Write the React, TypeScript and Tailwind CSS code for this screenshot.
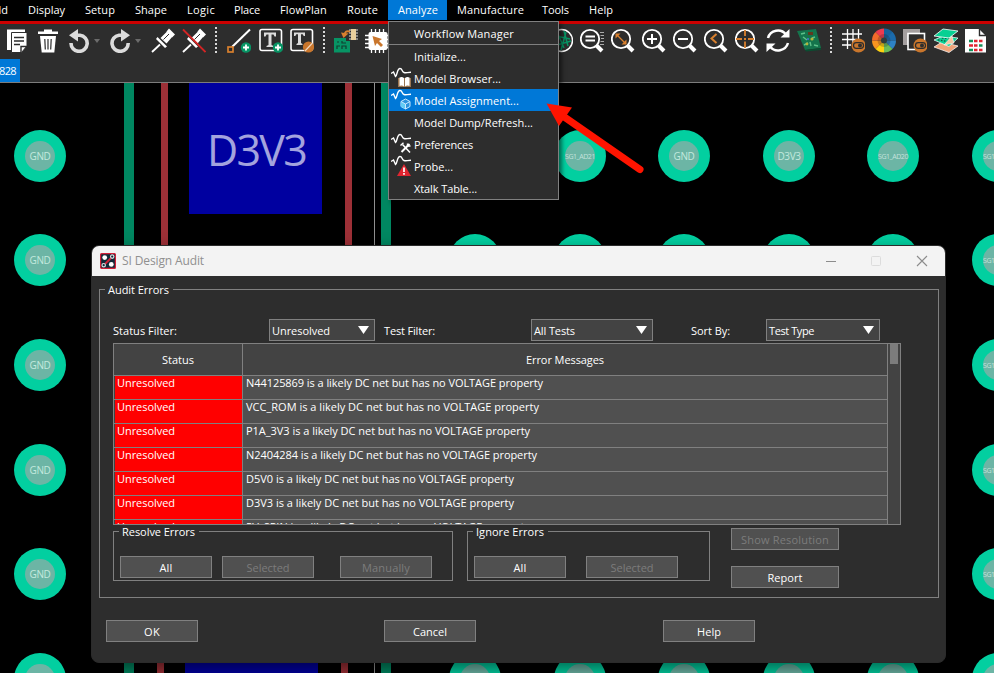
import React, { useLayoutEffect, useRef, useState } from "react";

/* Text set to an exact advance width by spreading the difference over its letters. */
function Fit({ children, w, className = "" }: { children: string; w: number; className?: string }) {
  const ref = useRef<HTMLSpanElement>(null);
  const [spacing, setSpacing] = useState(0);
  useLayoutEffect(() => {
    if (ref.current) {
      const natural = ref.current.getBoundingClientRect().width;
      setSpacing((w - natural) / children.length);
    }
  }, []);
  return (
    <span ref={ref} className={`inline-block whitespace-pre ${className}`} style={{ letterSpacing: spacing }}>
      {children}
    </span>
  );
}

/* ---------- toolbar icons ---------- */

function Icon({ children }: { children?: React.ReactNode }) {
  return (
    <svg width="24" height="25" viewBox="0 0 24 25" fill="none" className="shrink-0">
      {children}
    </svg>
  );
}

function Lens({ children }: { children?: React.ReactNode }) {
  return (
    <Icon>
      <path d="M16.5 17.5 22 23" stroke="#fff" strokeWidth="4" />
      <circle cx="10" cy="11" r="9.2" stroke="#fff" strokeWidth="1.8" />
      {children}
    </Icon>
  );
}

function Divider() {
  return (
    <svg width="6" height="27" viewBox="0 0 6 27" className="shrink-0">
      <path d="M3 0V26" stroke="#d8d8d8" strokeWidth="2" strokeDasharray="2 2" />
    </svg>
  );
}

function Caret({ className = "" }: { className?: string }) {
  return (
    <svg width="6" height="4" viewBox="0 0 6 4" className={`mt-[11px] ${className}`}>
      <path d="M0 0H6L3 4Z" fill="#6c6c6c" />
    </svg>
  );
}

function Pin() {
  return (
    <>
      <path d="M1 24 9 16.5" stroke="#fff" strokeWidth="1.8" />
      <path d="M15.5 3.5 18 .5 24 6.5 21 9.500Z" fill="#fff" />
      <path d="M16 3.5 21.500 8.500 15.500 15.500 9.500 10Z" fill="#fff" />
      <path d="M12.5 11.500 18 6" stroke="#2d2d2d" strokeWidth="1" />
      <path d="M6.5 9 16 18.5 14 20 5 11Z" fill="#fff" />
    </>
  );
}

function Plus({ x, y }: { x: number; y: number }) {
  return (
    <>
      <circle cx={x} cy={y} r="5.2" fill="#079464" />
      <path d={`M${x - 3} ${y}h6M${x} ${y - 3}v6`} stroke="#fff" strokeWidth="1.8" />
    </>
  );
}

function Eye() {
  return (
    <>
      <circle cx="17.5" cy="17.5" r="7" fill="#c9762c" />
      <rect x="12.5" y="14.7" width="10" height="5.6" rx="2.8" stroke="#2d2d2d" strokeWidth="1.2" />
      <circle cx="19" cy="17.5" r="2" fill="#2d2d2d" />
    </>
  );
}

function Toolbar() {
  return (
    <div className="flex h-[35px] items-start gap-[7px] pt-1 pl-[5px]">
      <Icon>
        <path d="M2 1.500H20V6H6V22H2Z" fill="#fff" />
        <path d="M6.500 4.5H22V18L16.500 24.500H6.500Z" fill="#fff" stroke="#2d2d2d" strokeWidth="1" />
        <path d="M9 9.5H19M9 13H19M9 16.5H15" stroke="#2d2d2d" strokeWidth="1.4" />
        <path d="M16 24.5V18.5H22" stroke="#2d2d2d" strokeWidth="1.4" />
      </Icon>
      <Icon>
        <path d="M2 3.5H22V6H2ZM8 1.5H16V4H8Z" fill="#fff" />
        <path d="M4 8H20L18.3 24.5H5.7Z" fill="#fff" />
        <path d="M8.8 11 9.3 21.5M12 11V21.5M15.2 11 14.7 21.5" stroke="#2d2d2d" strokeWidth="1.2" />
      </Icon>
      <div className="flex w-[34px]">
        <Icon>
          <path d="M9 7.2H13A8.1 8.1 0 1 1 4 15" stroke="#dcdcdc" strokeWidth="3.6" />
          <path d="M2 7.3 11 1V13.5Z" fill="#dcdcdc" />
        </Icon>
        <Caret className="ml-[3px]" />
      </div>
      <div className="flex w-9">
        <Icon>
          <path d="M15 7.2H11A8.1 8.1 0 1 0 20.2 15" stroke="#dcdcdc" strokeWidth="3.6" />
          <path d="M22 7.3 13 1V13.5Z" fill="#dcdcdc" />
        </Icon>
        <Caret className="ml-[3px]" />
      </div>
      <Icon>
        <Pin />
      </Icon>
      <Icon>
        <Pin />
        <path d="M1 1.5 23.5 24" stroke="#d52525" strokeWidth="1.8" />
      </Icon>
      <div className="-mt-px flex w-[7px]">
        <Divider />
      </div>
      <Icon>
        <path d="M5 19 23 1.5" stroke="#fff" strokeWidth="2" />
        <rect x="1" y="19" width="5" height="5" stroke="#d9802e" strokeWidth="1.7" />
        <Plus x={19} y={19.5} />
      </Icon>
      <div className="ml-px flex">
        <Icon>
          <rect x="1" y="1.5" width="21.5" height="21" rx="2" stroke="#fff" strokeWidth="1.6" />
          <path d="M5 4.5H17V8.5H15.5L14.5 6.5H12.5V17L14.5 18V19H7.5V18L9.5 17V6.5H7.5L6.5 8.5H5Z" fill="#dcdcdc" />
          <Plus x={19} y={19.5} />
        </Icon>
      </div>
      <Icon>
        <rect x="1" y="1.5" width="21.5" height="21" rx="2" stroke="#fff" strokeWidth="1.6" />
        <path d="M4 4.5H15V8H13.7L12.7 6.3H11V15L12.5 16V17H6.5V16L8 15V6.3H6.3L5.3 8H4Z" fill="#dcdcdc" />
        <circle cx="18.5" cy="19" r="5.6" fill="#c9762c" />
        <path d="M15 23 22.5 15" stroke="#f0d8c0" strokeWidth="1.1" />
      </Icon>
      <div className="-mt-px flex">
        <Divider />
      </div>
      <Icon>
        <path d="M0 10H12V13H16V24.5H0Z" fill="#079464" />
        <path d="M3 14H5M3 21V18H6M8 21V18H12V21M8 13V15H12" stroke="#123e30" strokeWidth="1.2" />
        <path d="M16 3.500C12 2.5 11 4 10.5 7" stroke="#d9802e" strokeWidth="2" />
        <path d="M7 4.500 14.5 5.5 9.500 10Z" fill="#d9802e" />
        <path d="M15 2H24M15 5H24M15 8H24M15 11H24" stroke="#ddd" strokeWidth="1" />
        <rect x="17" y="1" width="5" height="11" fill="#e8cf9d" />
      </Icon>
      <Icon>
        <path d="M6.5 1V25M10.5 1V25M14.5 1V25M18.5 1V25M0 7.5H24M0 11.5H24M0 15.5H24M0 19.5H24" stroke="#fff" strokeWidth="1.3" />
        <rect x="3.5" y="4" width="19" height="18" rx="2" fill="#fff" />
        <path d="M7.5 8 17 11 14 13 18 17 16 19 12 15 10 18Z" fill="#c9762c" />
      </Icon>
      <div className="w-[146px] shrink-0" />
      <Icon>
        <circle cx="12.5" cy="12.5" r="11" stroke="#fff" strokeWidth="1.5" />
        <path d="M8 4 15 20M17 4 12 22M7 8 21 11M8 17 22 13M15 3 19 18" stroke="#079464" strokeWidth="1.5" />
      </Icon>
      <Lens>
        <path d="M5.5 8.5H15M5.5 12.5H15" stroke="#fff" strokeWidth="1.8" />
        <path d="M20 4.5H24M20.5 7.5H24M21 10.5H24M20.5 13.5H24M20 16.5H24" stroke="#aaa" strokeWidth="1" />
      </Lens>
      <Lens>
        <path d="M6 7 14 15" stroke="#d9802e" strokeWidth="1.3" />
        <path d="M4.5 5.5H9.5L4.5 10.5ZM15.5 16.5H10.5L15.5 11.5Z" fill="#d9802e" />
      </Lens>
      <Lens>
        <path d="M5 11H15M10 6V16" stroke="#fff" strokeWidth="2" />
      </Lens>
      <Lens>
        <path d="M5 11H15" stroke="#fff" strokeWidth="2" />
      </Lens>
      <Lens>
        <path d="M12.5 6 7.5 10.5 12.5 15" stroke="#d9802e" strokeWidth="2" />
      </Lens>
      <Lens>
        <path d="M10 2V8M10 13.5V20M1 11H7M13 11H19" stroke="#d9802e" strokeWidth="1.8" />
        <path d="M9 11H11" stroke="#d9802e" strokeWidth="2" />
      </Lens>
      <Icon>
        <path d="M2 10A10.3 10.3 0 0 1 20 6.5M22 15A10.3 10.3 0 0 1 4 18.5" stroke="#fff" strokeWidth="2.5" />
        <path d="M23.5 1V9.5H14.5ZM.5 24V15.5H9.5Z" fill="#fff" />
      </Icon>
      <Icon>
        <path d="M0 3 19 1 24 20 8 22Z" fill="#14744c" />
        <path d="M8 22 24 20V22L9 23.5Z" fill="#0a4d31" />
        <path d="M11 4H16V7H11Z" fill="#61391f" />
        <path d="M4 6 8 5M6 9 10 12M15 10 18 9M7 17 11 15M17 17 21 18M13 14 14 18" stroke="#5ec08a" strokeWidth="1.4" />
        <circle cx="15" cy="11" r="1.6" fill="#b3b53c" />
        <circle cx="10" cy="16" r="1.4" fill="#b3b53c" />
        <path d="M10 10H12V12H10Z" fill="#3b76b0" />
      </Icon>
      <div className="-mt-px flex">
        <Divider />
      </div>
      <Icon>
        <path d="M6.5 1V21M12 1V15M17.5 1V12M1 6H21M1 11.5H16M1 17H10" stroke="#fff" strokeWidth="1.3" />
        <Eye />
      </Icon>
      <Icon>
        <path d="M12 12.5V.5A12 12 0 0 1 21 4.5Z" fill="#17629c" />
        <path d="M12 12.5 20.5 4A12 12 0 0 1 24 12.5Z" fill="#1b6bac" />
        <path d="M12 12.5H24A12 12 0 0 1 20.5 21Z" fill="#2e82c4" />
        <path d="M12 12.5 20.5 21A12 12 0 0 1 12 24.5Z" fill="#6bbd58" />
        <path d="M12 12.5V24.5A12 12 0 0 1 3.5 21Z" fill="#fdd110" />
        <path d="M12 12.5 3.5 21A12 12 0 0 1 0 12.5Z" fill="#f79420" />
        <path d="M12 12.5H0A12 12 0 0 1 3.5 4Z" fill="#f36b2a" />
        <path d="M12 12.5 3.5 4A12 12 0 0 1 12 .5Z" fill="#ee3b50" />
        <circle cx="12" cy="12.5" r="6.5" fill="#222" fillOpacity=".25" />
        <circle cx="12" cy="12.5" r="3" fill="#303c3c" />
      </Icon>
      <Icon>
        <path d="M0 1H17V17H0Z" fill="#a49f9f" />
        <rect x="5" y="5.5" width="16.5" height="16" fill="#2d2d2d" stroke="#fff" strokeWidth="1.6" />
        <Eye />
      </Icon>
      <Icon>
        <path d="M0 19 8 14 24 18 15 24.5Z" fill="#f0a478" stroke="#fff" strokeWidth=".7" />
        <path d="M0 12 9 8 24 10 15 18.5Z" fill="#08d093" stroke="#fff" strokeWidth=".7" />
        <path d="M4 12 18 14M8 10 20 11" stroke="#16573f" strokeWidth="1.3" strokeDasharray="1.5 1.5" />
        <path d="M0 8 9 1 24 3 15 10Z" fill="#08d093" stroke="#fff" strokeWidth=".8" />
        <path d="M10 17 18 8 20 15Z" fill="#f6c7a2" stroke="#fff" strokeWidth=".6" />
      </Icon>
      <Icon>
        <path d="M0 1H14L21 8V24.5H0Z" fill="#fff" />
        <path d="M14.5 1V7.5H21" stroke="#2d2d2d" strokeWidth="1.4" />
        <path d="M4 13H8M14 17.5H17.500M4 22H8" stroke="#16915b" strokeWidth="2.4" />
        <path d="M9 13H12.5M4 17.5H8M9 22H12.5M14 22H17.5" stroke="#e02530" strokeWidth="2.4" />
        <path d="M14 13H17.5M9 17.5H12.5" stroke="#e02530" strokeWidth="2.4" />
      </Icon>
    </div>
  );
}

/* ---------- menu bar ---------- */

const menus: [string, number, string][] = [
  ["Display", 37, "w-[57px]"],
  ["Setup", 30, "w-[50px]"],
  ["Shape", 32, "w-[52px]"],
  ["Logic", 28, "w-[47px]"],
  ["Place", 26, "w-[46px]"],
  ["FlowPlan", 47, "w-[67px]"],
  ["Route", 31, "w-[51px]"],
  ["Analyze", 40, "w-[59px]"],
  ["Manufacture", 67, "w-[85px]"],
  ["Tools", 27, "w-[47px]"],
  ["Help", 24, "w-[44px]"],
];

function MenuBar() {
  return (
    <div className="flex h-[21px] bg-black leading-[20px]">
      <div className="flex w-[18px] justify-end pr-[10px]">
        <span>dd</span>
      </div>
      {menus.map(([name, w, box]) => (
        <div key={name} className={`${box} h-5 pl-[10px] ${name === "Analyze" ? "bg-[#0078d7]" : ""}`}>
          <Fit w={w}>{name}</Fit>
        </div>
      ))}
    </div>
  );
}

/* ---------- drop-down menu ---------- */

function Wave({ children }: { children: React.ReactNode }) {
  return (
    <svg width="20" height="22" viewBox="0 0 20 22" fill="none">
      <path d="M0 6.5 2.5 5 4.5 9.5C6.5 8 6 1.5 9 1.5 11.5 1.5 10.5 4.5 13 5.5 15 6.3 16 5.3 20 5.3" stroke="#fff" strokeWidth="1.4" />
      {children}
    </svg>
  );
}

const book = (
  <Wave>
    <path d="M7 11H20V20H7Z" fill="#9b7550" />
    <path d="M8.5 10.5Q11 9.5 13 11V19.5Q11 18 8.5 19ZM18.5 10.5Q16 9.5 14 11V19.5Q16 18 18.5 19Z" fill="#fff" />
  </Wave>
);
const cube = (
  <Wave>
    <path d="M14.5 10 19 12.5V17.5L14.5 20 10 17.5V12.5Z" fill="#2b93dd" stroke="#c9e8ff" strokeWidth="1" />
    <path d="M10 12.5 14.5 15V20L10 17.5Z" fill="#62cdf5" />
    <path d="M10 12.5 14.5 15 19 12.5M14.5 15V20" stroke="#c9e8ff" strokeWidth="1" />
  </Wave>
);
const tools = (
  <Wave>
    <path d="M11.5 11.5 19 19.5" stroke="#fff" strokeWidth="1.6" />
    <path d="M18.5 11 10.5 19" stroke="#fff" strokeWidth="2" />
    <path d="M9.5 12.5 12.5 9.8M16.5 10.5V13H19.5" stroke="#fff" strokeWidth="1.4" />
  </Wave>
);
const warning = (
  <Wave>
    <path d="M13 9 20 21H6Z" fill="#e02530" />
    <path d="M13 12.5V17M13 18V19.8" stroke="#fff" strokeWidth="1.7" />
  </Wave>
);

const entries: { text: string; w: number; icon?: React.ReactNode }[] = [
  { text: "Initialize...", w: 52 },
  { text: "Model Browser...", w: 87, icon: book },
  { text: "Model Assignment...", w: 105, icon: cube },
  { text: "Model Dump/Refresh...", w: 119 },
  { text: "Preferences", w: 59, icon: tools },
  { text: "Probe...", w: 39, icon: warning },
  { text: "Xtalk Table...", w: 63 },
];

function AnalyzeMenu() {
  return (
    <div className="absolute top-[21px] left-[388px] h-[179px] w-[171px] border border-[#808080] bg-[#2d2d2d] leading-[22px] shadow-[3px_3px_4px_rgba(0,0,0,0.5)]">
      <div className="h-[23px] border-b border-[#808080] pl-[25px]">
        <Fit w={100} className="mt-px">Workflow Manager</Fit>
      </div>
      <div className="flex flex-col">
        {entries.map((e) => (
          <div
            key={e.text}
            className={`flex h-[22px] pl-[2px] ${e.text === "Model Assignment..." ? "bg-[#0078d7]" : ""}`}
          >
            <div className="w-[23px] shrink-0">{e.icon}</div>
            <Fit w={e.w} className="pt-px">{e.text}</Fit>
          </div>
        ))}
      </div>
    </div>
  );
}

/* ---------- board canvas ---------- */

function Pad({ x, y, net }: { x: number; y: number; net: string }) {
  return (
    <div
      className="absolute flex size-[52px] items-center justify-center rounded-full bg-[#02cfa0]"
      style={{ left: x - 26, top: y - 26 }}
    >
      <div className="flex size-[30px] items-center justify-center rounded-full bg-[#6cb5a5]">
        {net.length > 4 ? (
          <Fit w={30} className="text-[7px] leading-none text-[#c4e2dc]">{net}</Fit>
        ) : (
          <Fit w={net === "GND" ? 21 : 23} className="text-[10px] leading-none text-[#c4e9de]">{net}</Fit>
        )}
      </div>
    </div>
  );
}

const columns = [475, 580, 684, 789, 893];
const rowsY = [156, 260, 365, 470, 574, 679];
const firstRow = ["GND", "SG1_AD21", "GND", "D3V3", "SG1_AD20"];

function Board() {
  return (
    <div className="absolute inset-0 overflow-hidden bg-black">
      <div className="absolute top-0 left-[124px] h-full w-[10px] bg-[#008761]" />
      <div className="absolute top-0 left-[161px] h-[300px] w-[7px] bg-[#9d3037]" />
      <div className="absolute top-[400px] left-[157px] h-[300px] w-[7px] bg-[#9d3037]" />
      <div className="absolute top-0 left-[345px] h-[300px] w-[7px] bg-[#9d3037]" />
      <div className="absolute top-[400px] left-[341px] h-[300px] w-[7px] bg-[#9d3037]" />
      <div className="absolute top-0 left-[374px] h-full w-px bg-[#909090]" />
      <div className="absolute top-0 left-[381px] h-full w-[10px] bg-[#008761]" />
      <div className="absolute top-[81px] left-[189px] flex h-[133px] w-[133px] items-center justify-center bg-[#0000a0]">
        <Fit w={101} className="pt-[3px] pl-[2px] text-[43px] leading-none text-[#a3a3de]">D3V3</Fit>
      </div>
      <div className="absolute top-[600px] left-[185px] h-[73px] w-[133px] bg-[#0000a0]" />
      {rowsY.map((y) => (
        <Pad key={y} x={40} y={y} net="GND" />
      ))}
      {rowsY.map((y) => (
        <Pad key={y} x={998} y={y} net="SG1_AD19" />
      ))}
      {columns.map((x, i) => (
        <Pad key={x} x={x} y={156} net={firstRow[i]} />
      ))}
      {columns.map((x) => (
        <Pad key={x} x={x} y={260} net="GND" />
      ))}
      {columns.map((x) => (
        <Pad key={x} x={x} y={679} net="GND" />
      ))}
    </div>
  );
}

/* ---------- dialog ---------- */

function Button({ text, w, wide, disabled }: { text: string; w: number; wide?: boolean; disabled?: boolean }) {
  return (
    <button
      className={`flex h-[22px] shrink-0 items-center justify-center border border-[#808080] bg-[#505050] leading-none ${
        wide ? "w-[108px]" : "w-[92px]"
      } ${disabled ? "text-[#7c7c7c]" : "text-white"}`}
    >
      <Fit w={w}>{text}</Fit>
    </button>
  );
}

function Select({ text, w, box }: { text: string; w: number; box: string }) {
  return (
    <div className={`${box} flex h-[22px] shrink-0 justify-between border border-[#808080] bg-[#434343] pr-[5px] pl-[2px] leading-[22px]`}>
      <Fit w={w}>{text}</Fit>
      <svg width="11" height="8" viewBox="0 0 11 8" className="mt-[6px]">
        <path d="M0 0H11L5.5 8Z" fill="#fff" />
      </svg>
    </div>
  );
}

const errors: [string, number][] = [
  ["N44125869 is a likely DC net but has no VOLTAGE property", 297],
  ["VCC_ROM is a likely DC net but has no VOLTAGE property", 293],
  ["P1A_3V3 is a likely DC net but has no VOLTAGE property", 284],
  ["N2404284 is a likely DC net but has no VOLTAGE property", 291],
  ["D5V0 is a likely DC net but has no VOLTAGE property", 268],
  ["D3V3 is a likely DC net but has no VOLTAGE property", 268],
  ["5V_SPIN is a likely DC net but has no VOLTAGE property", 284],
];

function ErrorTable() {
  return (
    <div className="mt-[2px] ml-[13px] flex h-[182px] w-[788px] overflow-hidden border border-[#808080] bg-[#434343]">
      <div className="w-[774px] shrink-0">
        <div className="flex h-8 border-b border-[#808080] bg-[#434343] leading-[32px]">
          <div className="w-[129px] border-r border-[#808080] text-center">
            <Fit w={32}>Status</Fit>
          </div>
          <div className="w-[645px] border-r border-[#808080] text-center">
            <Fit w={78}>Error Messages</Fit>
          </div>
        </div>
        {errors.map(([text, w]) => (
          <div key={text} className="flex h-6 border-b border-[#808080] leading-[13px]">
            <div className="w-[129px] border-r border-[#808080] pl-px">
              <div className="h-full bg-[#ff0000] pl-[2px]">
                <Fit w={58}>Unresolved</Fit>
              </div>
            </div>
            <div className="w-[645px] border-r border-[#808080] bg-[#505050] pl-[3px]">
              <Fit w={w}>{text}</Fit>
            </div>
          </div>
        ))}
      </div>
      <div className="flex-1 pl-[2px]">
        <div className="h-5 w-2 bg-[#7c7c7c]" />
      </div>
    </div>
  );
}

function Dialog() {
  return (
    <div className="absolute top-[245px] left-[91px] flex h-[418px] w-[855px] flex-col overflow-hidden rounded-lg border border-[#2b2b2b] bg-[#2d2d2d] shadow-[0_6px_16px_rgba(0,0,0,0.5)]">
      <div className="flex h-[30px] shrink-0 items-center bg-[#f3f3f3] pl-2">
        <svg width="16" height="16" viewBox="0 0 16 16" fill="none">
          <rect x=".6" y=".6" width="14.8" height="14.8" rx="1" fill="#102a38" stroke="#d21f38" strokeWidth="1.2" />
          <path d="M5 11 11 5" stroke="#d21f38" strokeWidth="1.8" />
          <circle cx="4.7" cy="4.6" r="2.4" fill="#fff" />
          <circle cx="11.3" cy="11.4" r="2.4" fill="#fff" />
          <circle cx="12.2" cy="3.6" r="1.7" stroke="#d5dde0" strokeWidth="1.2" />
          <circle cx="3.7" cy="12.2" r="1.7" stroke="#d5dde0" strokeWidth="1.2" />
        </svg>
        <Fit w={82} className="ml-[6px] text-[12px] text-[#909090]">SI Design Audit</Fit>
        <svg width="102" height="12" viewBox="0 0 102 12" fill="none" className="mr-[17px] ml-auto">
          <path d="M0 6.5H10" stroke="#8c8c8c" />
          <rect x="45.5" y="1.5" width="9" height="9" rx="1" stroke="#dcdcdc" />
          <path d="M91 1 101 11M101 1 91 11" stroke="#8c8c8c" strokeWidth="1.1" />
        </svg>
      </div>

      <div className="mt-[13px] ml-[7px] flex h-[309px] w-[840px] shrink-0 flex-col border border-[#808080]">
        <div className="-mt-2 ml-[5px] h-4 w-fit bg-[#2d2d2d] pr-1 pl-[3px] leading-[15px]">
          <Fit w={61}>Audit Errors</Fit>
        </div>
        <div className="mt-[21px] flex pl-[13px] leading-[24px]">
          <div className="h-[22px] w-[156px]">
            <Fit w={64}>Status Filter:</Fit>
          </div>
          <Select text="Unresolved" w={58} box="w-[106px]" />
          <div className="h-[22px] w-[156px] pl-[9px]">
            <Fit w={51}>Test Filter:</Fit>
          </div>
          <Select text="All Tests" w={41} box="w-[122px]" />
          <div className="h-[22px] w-[113px] pl-[38px]">
            <Fit w={39}>Sort By:</Fit>
          </div>
          <Select text="Test Type" w={45} box="w-[114px]" />
        </div>
        <ErrorTable />
        <div className="mt-[3px] flex pl-[13px]">
          <div className="mt-[3px] h-[50px] w-[340px] border border-[#808080]">
            <div className="-mt-[6px] ml-[5px] flex h-3 w-fit bg-[#2d2d2d] pr-1 pl-[3px] leading-[11px]">
              <Fit w={73}>Resolve Errors</Fit>
            </div>
            <div className="mt-[18px] ml-[6px] flex">
              <Button text="All" w={13} />
              <div className="w-[10px]" />
              <Button text="Selected" w={43} disabled />
              <div className="w-[26px]" />
              <Button text="Manually" w={48} disabled />
            </div>
          </div>
          <div className="mt-[3px] ml-[14px] h-[50px] w-[243px] border border-[#808080]">
            <div className="-mt-[6px] ml-[5px] flex h-3 w-fit bg-[#2d2d2d] pr-1 pl-[3px] leading-[11px]">
              <Fit w={68}>Ignore Errors</Fit>
            </div>
            <div className="mt-[18px] ml-[6px] flex gap-5">
              <Button text="All" w={13} />
              <Button text="Selected" w={43} disabled />
            </div>
          </div>
          <div className="ml-[21px] flex flex-col gap-4">
            <Button text="Show Resolution" w={88} wide disabled />
            <Button text="Report" w={35} wide />
          </div>
        </div>
      </div>

      <div className="mt-[22px] flex pl-[14px]">
        <Button text="OK" w={16} />
        <div className="w-[186px]" />
        <Button text="Cancel" w={34} />
        <div className="w-[187px]" />
        <Button text="Help" w={24} />
      </div>
    </div>
  );
}

export default function App() {
  return (
    <div className="relative flex h-[673px] w-[994px] flex-col overflow-hidden bg-black font-['Open_Sans','Noto_Sans',sans-serif] text-[11px] text-white">
      <Board />
      <div className="relative flex flex-col border-b border-[#7c7c7c] bg-[#2d2d2d]">
        <MenuBar />
        <div className="h-[3px] bg-[#cc0000]" />
        <Toolbar />
        <div className="flex h-[23px] w-5 items-center bg-[#0078d7]">
          <Fit w={17} className="-ml-px pt-[2px]">828</Fit>
        </div>
      </div>
      <AnalyzeMenu />
      <svg className="pointer-events-none absolute top-[95px] left-[540px]" width="112" height="86" viewBox="540 95 112 86">
        <path d="M560 114 640 169.500" stroke="#ff1400" strokeWidth="7" strokeLinecap="round" />
        <path d="M546.500 103.500 572 107.500 559 126Z" fill="#ff1400" />
      </svg>
      <Dialog />
    </div>
  );
}
